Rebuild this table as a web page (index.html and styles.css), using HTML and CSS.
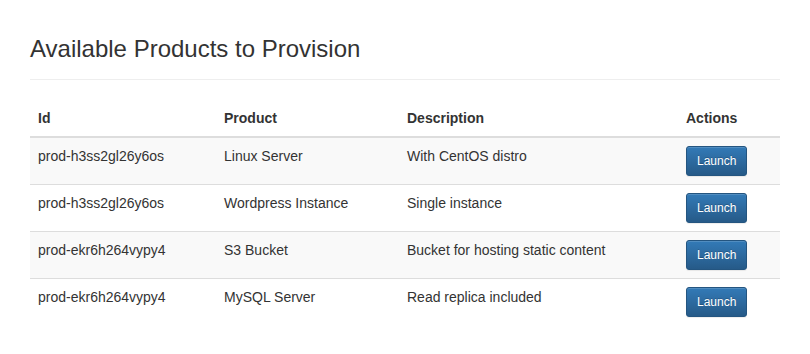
FILE: index.html
```html
<!DOCTYPE html>
<html lang="en">
<head>
    <meta charset="UTF-8">
    <meta name="viewport" content="width=device-width, initial-scale=1.0">
    <title>Products</title>
    <link rel="stylesheet" href="styles.css">
</head>
<body>
    <div class="container">
        <div class="page-header">
            <h3>Available Products to Provision</h3>
        </div>

        <table class="products">
            <thead>
                <tr>
                    <th class="col-id">Id</th>
                    <th class="col-product">Product</th>
                    <th class="col-desc">Description</th>
                    <th class="col-actions">Actions</th>
                </tr>
            </thead>
            <tbody>
                <tr>
                    <td>prod-h3ss2gl26y6os</td>
                    <td>Linux Server</td>
                    <td>With CentOS distro</td>
                    <td><button class="btn">Launch</button></td>
                </tr>
                <tr>
                    <td>prod-h3ss2gl26y6os</td>
                    <td>Wordpress Instance</td>
                    <td>Single instance</td>
                    <td><button class="btn">Launch</button></td>
                </tr>
                <tr>
                    <td>prod-ekr6h264vypy4</td>
                    <td>S3 Bucket</td>
                    <td>Bucket for hosting static content</td>
                    <td><button class="btn">Launch</button></td>
                </tr>
                <tr>
                    <td>prod-ekr6h264vypy4</td>
                    <td>MySQL Server</td>
                    <td>Read replica included</td>
                    <td><button class="btn">Launch</button></td>
                </tr>
            </tbody>
        </table>
    </div>
</body>
</html>
```

FILE: styles.css
```css
body {
    margin: 0;
    font-family: "Liberation Sans", Arial, Helvetica, sans-serif;
    font-size: 14px;
    line-height: 20px;
    color: #333;
    background-color: #fff;
}
.container {
    padding: 0 30px;
}
.page-header {
    margin: 36px 0 20px;
    padding-bottom: 17px;
    border-bottom: 1px solid #eee;
}
.page-header h3 {
    margin: 0;
    font-size: 24px;
    font-weight: 500;
    line-height: 26px;
}
.products {
    width: 100%;
    border-collapse: collapse;
    border-spacing: 0;
}
.products th,
.products td {
    padding: 8px;
    text-align: left;
    vertical-align: top;
}
.products th {
    font-weight: bold;
    vertical-align: bottom;
    border-bottom: 2px solid #ddd;
}
.products td {
    border-top: 1px solid #ddd;
}
.products tbody tr:nth-child(odd) {
    background-color: #f9f9f9;
}
.col-id { width: 170px; }
.col-product { width: 167px; }
.col-desc { width: 263px; }
.col-actions { width: 86px; }
.btn {
    display: inline-block;
    padding: 5px 10px;
    font-family: inherit;
    font-size: 12px;
    line-height: 18px;
    color: #fff;
    text-shadow: 0 -1px 0 rgba(0,0,0,0.2);
    background-image: linear-gradient(to bottom, #337ab7 0, #265a88 100%);
    border: 1px solid #245580;
    border-radius: 3px;
    box-shadow: inset 0 1px 0 rgba(255,255,255,0.15), 0 1px 1px rgba(0,0,0,0.075);
    cursor: pointer;
    vertical-align: middle;
}
```
